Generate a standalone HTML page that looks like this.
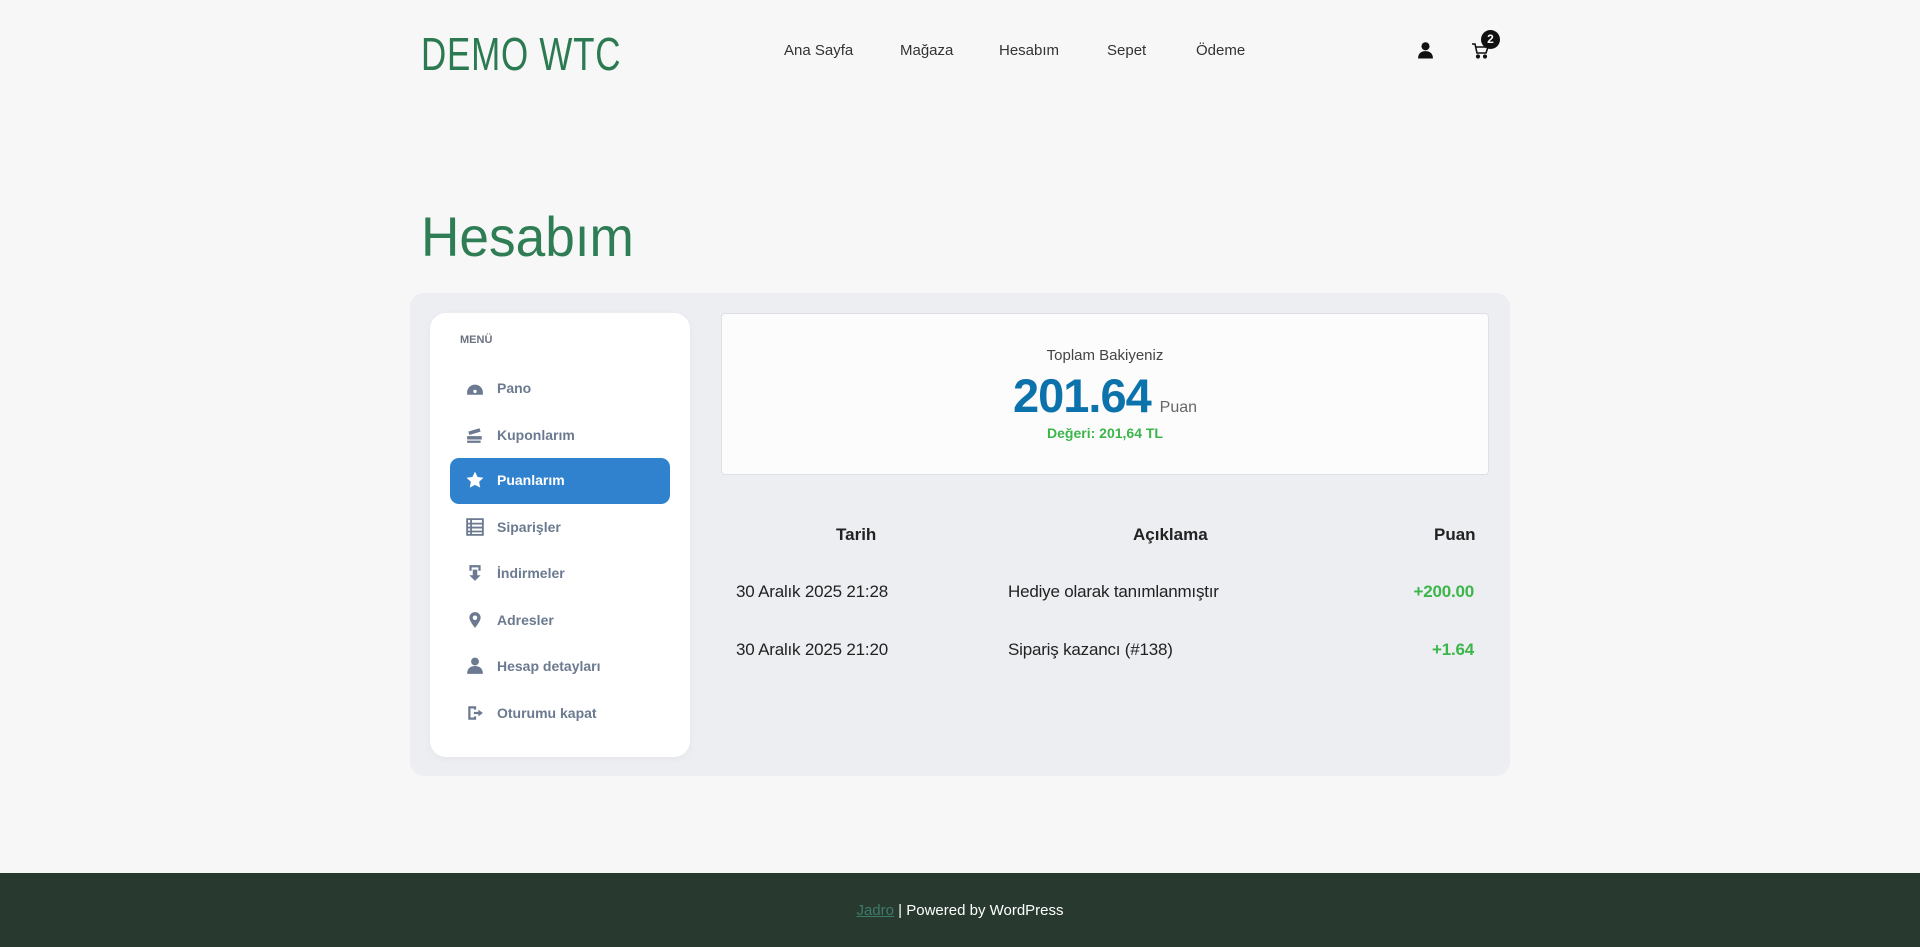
<!DOCTYPE html>
<html><head><meta charset="utf-8"><style>
*{margin:0;padding:0;box-sizing:border-box}
body{width:1920px;height:947px;background:#f7f7f7;font-family:"Liberation Sans",sans-serif;position:relative;overflow:hidden;color:#222}
.a{position:absolute;white-space:nowrap}
.logo{left:421px;top:27px;font-size:46px;color:#2b7a51;transform:scaleX(.76);transform-origin:left;letter-spacing:1px}
.nav{top:42px;font-size:15px;color:#333}
h1{position:absolute;left:421px;top:204px;font-size:56px;font-weight:normal;color:#2e7d55;transform:scaleX(.95);transform-origin:left}
.box{left:410px;top:293px;width:1100px;height:483px;background:#edeef2;border-radius:14px}
.side{left:430px;top:313px;width:260px;height:444px;background:#fff;border-radius:16px;box-shadow:0 2px 8px rgba(0,0,0,.04)}
.menu{left:460px;top:334px;font-size:11px;font-weight:bold;color:#6b7280}
.it{left:497px;font-size:14px;font-weight:bold;color:#6b7a90}
.ic{left:466px;width:18px;height:18px}
.act{left:450px;top:458px;width:220px;height:46px;background:#3182ce;border-radius:9px}
.card{left:721px;top:313px;width:768px;height:162px;background:#fcfcfc;border:1px solid #dde0e4;border-radius:4px}
.th{top:525px;font-size:17px;font-weight:bold;color:#222}
.td{font-size:17px;color:#222;letter-spacing:-.2px}
.g{color:#3cb54a;font-weight:bold}
.foot{left:0;top:873px;width:1920px;height:74px;background:#283a30}
</style></head><body>
<div class="a logo">DEMO WTC</div>
<div class="a nav" style="left:784px">Ana Sayfa</div>
<div class="a nav" style="left:900px">Mağaza</div>
<div class="a nav" style="left:999px">Hesabım</div>
<div class="a nav" style="left:1107px">Sepet</div>
<div class="a nav" style="left:1196px">Ödeme</div>
<svg class="a" style="left:1417px;top:41px" width="17" height="18" viewBox="0 0 16 16"><circle cx="8" cy="4.5" r="3.8" fill="#111"/><path d="M1 16c0-5 3-7 7-7s7 2 7 7z" fill="#111"/></svg>
<svg class="a" style="left:1471px;top:42px" width="18" height="17" viewBox="0 0 18 17" fill="none" stroke="#111" stroke-width="1.6"><path d="M1 2h3l2 9h9l2-6H5"/><circle cx="7" cy="14.5" r="1.3" fill="#111"/><circle cx="14" cy="14.5" r="1.3" fill="#111"/></svg>
<div class="a" style="left:1481px;top:30px;width:19px;height:19px;border-radius:50%;background:#111;color:#fff;font-size:12px;font-weight:bold;text-align:center;line-height:19px">2</div>
<h1>Hesabım</h1>
<div class="a box"></div>
<div class="a side"></div>
<div class="a menu">MENÜ</div>
<div class="a act"></div>
<svg class="a ic" style="top:379px" viewBox="0 0 16 16"><path d="M1 12a7 7 0 0 1 14 0v2H1z" fill="#6b7a90"/><circle cx="8" cy="11" r="1.5" fill="#fff"/></svg>
<div class="a it" style="top:380px">Pano</div>
<svg class="a ic" style="top:426px" viewBox="0 0 16 16"><path d="M2 5l10-3 1 3-10 3zM1 9h13v3H1zM1 13h12v2H1z" fill="#6b7a90"/></svg>
<div class="a it" style="top:427px">Kuponlarım</div>
<svg class="a ic" style="top:471px" viewBox="0 0 16 16"><path d="M8 .5l2.3 4.8 5.2.7-3.8 3.6.9 5.2L8 12.3l-4.6 2.5.9-5.2L.5 6l5.2-.7z" fill="#fff"/></svg>
<div class="a it" style="top:472px;color:#fff">Puanlarım</div>
<svg class="a ic" style="top:518px" viewBox="0 0 16 16" fill="none" stroke="#6b7a90" stroke-width="1.6"><rect x="1" y="1" width="14" height="14"/><path d="M1 5h14M1 8.5h14M1 12h14M4.5 1v14"/></svg>
<div class="a it" style="top:519px">Siparişler</div>
<svg class="a ic" style="top:564px" viewBox="0 0 16 16"><path d="M3 1h10v5h-2V3H5v3H3zM6 5h4v5h3l-5 5-5-5h3z" fill="#6b7a90"/></svg>
<div class="a it" style="top:565px">İndirmeler</div>
<svg class="a ic" style="top:611px" viewBox="0 0 16 16"><path d="M8 1a5 5 0 0 1 5 5c0 3-5 9-5 9S3 9 3 6a5 5 0 0 1 5-5z" fill="#6b7a90"/><circle cx="8" cy="6" r="2" fill="#fff"/></svg>
<div class="a it" style="top:612px">Adresler</div>
<svg class="a ic" style="top:657px" viewBox="0 0 16 16"><circle cx="8" cy="4" r="3.5" fill="#6b7a90"/><path d="M1 15c0-5 3-7 7-7s7 2 7 7z" fill="#6b7a90"/></svg>
<div class="a it" style="top:658px">Hesap detayları</div>
<svg class="a ic" style="top:704px" viewBox="0 0 16 16"><path d="M2 2h7v3H7V4H4v8h3v-1h2v3H2z" fill="#6b7a90"/><path d="M7 7h4V5l4 3-4 3V9H7z" fill="#6b7a90"/></svg>
<div class="a it" style="top:705px">Oturumu kapat</div>
<div class="a card"></div>
<div class="a" style="left:721px;width:768px;top:347px;text-align:center;font-size:15px;color:#444">Toplam Bakiyeniz</div>
<div class="a" style="left:721px;width:768px;top:368px;text-align:center"><span style="font-size:47px;font-weight:bold;color:#0b72ab;letter-spacing:-1px">201.64</span> <span style="font-size:16px;color:#666">&nbsp;Puan</span></div>
<div class="a g" style="left:721px;width:768px;top:425px;text-align:center;font-size:14px">Değeri: 201,64 TL</div>
<div class="a th" style="left:836px">Tarih</div>
<div class="a th" style="left:1133px">Açıklama</div>
<div class="a th" style="left:1434px">Puan</div>
<div class="a td" style="left:736px;top:582px">30 Aralık 2025 21:28</div>
<div class="a td" style="left:1008px;top:582px">Hediye olarak tanımlanmıştır</div>
<div class="a td g" style="right:446px;top:582px">+200.00</div>
<div class="a td" style="left:736px;top:640px">30 Aralık 2025 21:20</div>
<div class="a td" style="left:1008px;top:640px">Sipariş kazancı (#138)</div>
<div class="a td g" style="right:446px;top:640px">+1.64</div>
<div class="a foot"></div>
<div class="a" style="left:0;width:1920px;top:902px;text-align:center;font-size:15px;color:#fff"><span style="color:#3d7a6a;text-decoration:underline">Jadro</span> | Powered by WordPress</div>
</body></html>
